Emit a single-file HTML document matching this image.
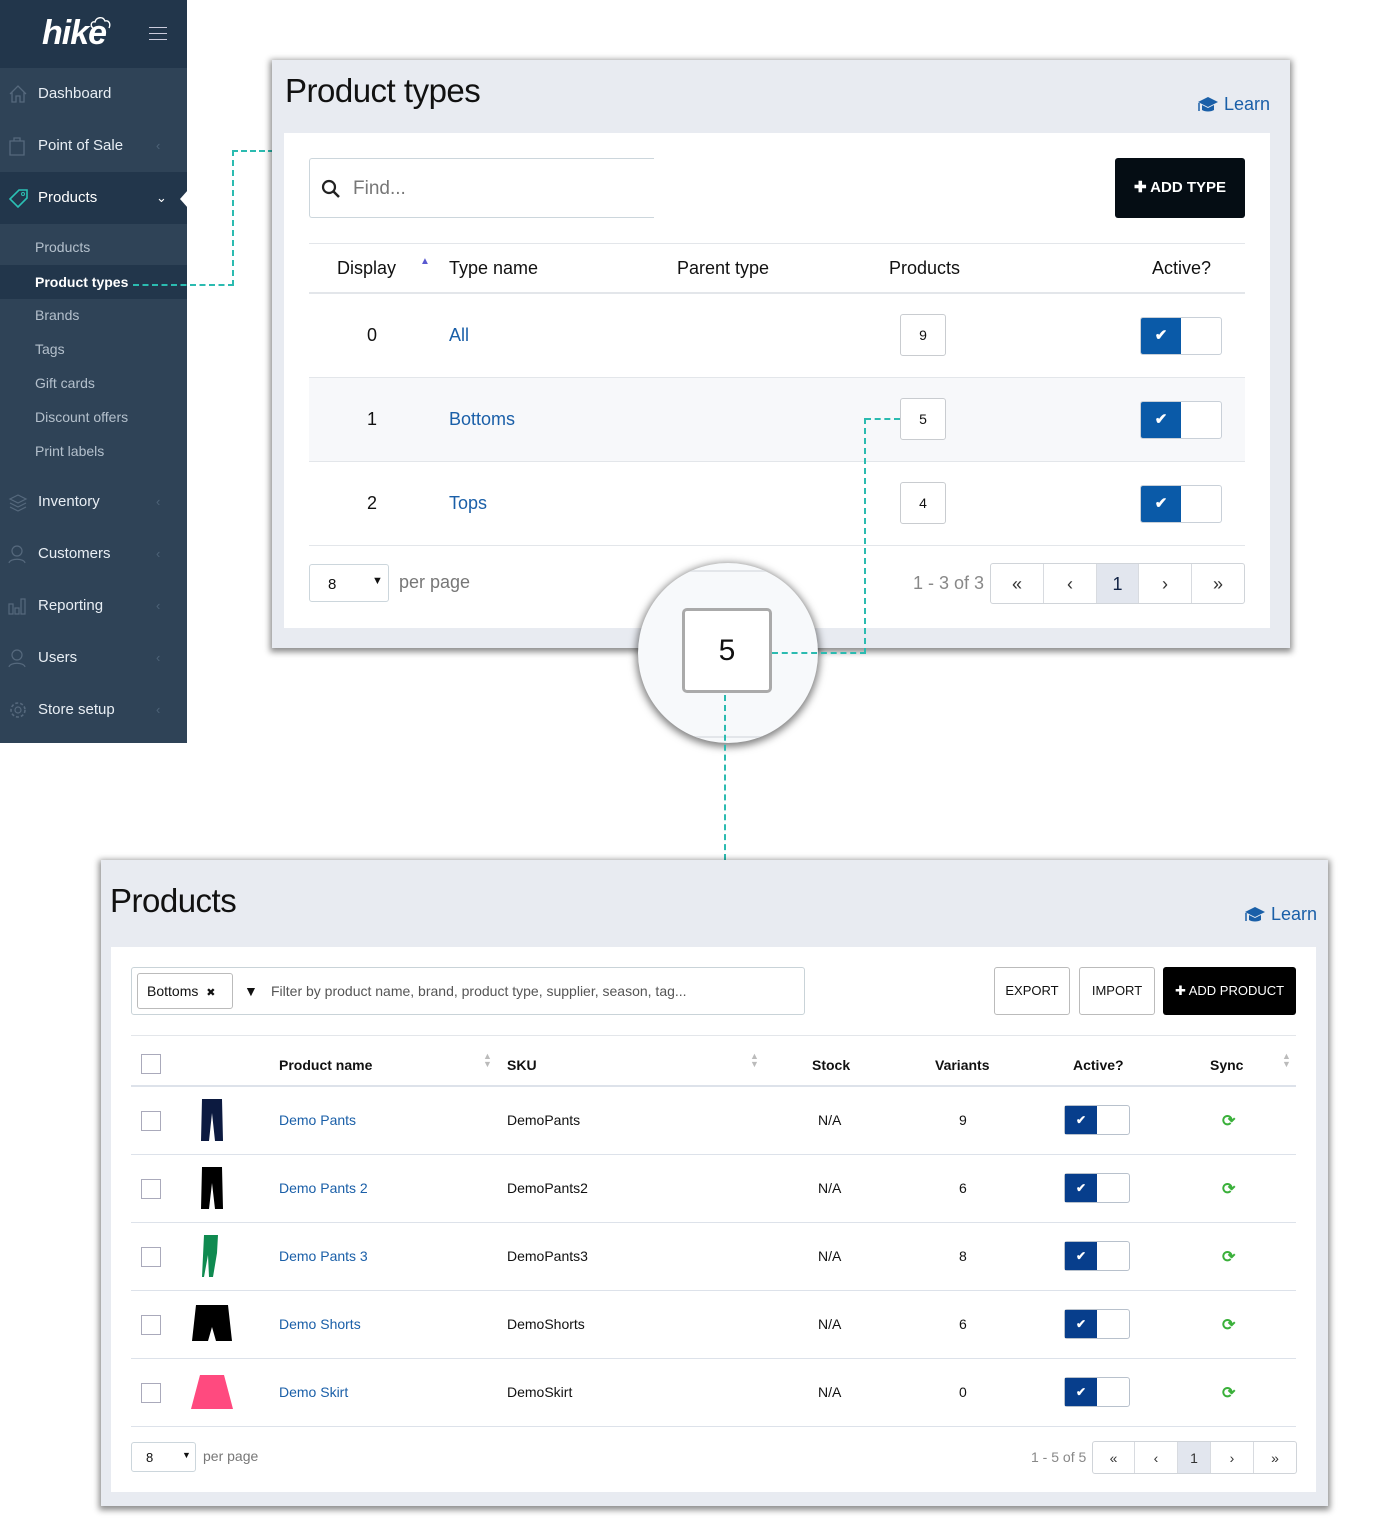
<!DOCTYPE html>
<html><head><meta charset="utf-8"><style>
*{box-sizing:border-box;margin:0;padding:0}
body{width:1392px;height:1533px;background:#fff;position:relative;font-family:"Liberation Sans",sans-serif;overflow:hidden;color:#111}
.a{position:absolute}
.side{left:0;top:0;width:187px;height:743px;background:#2f4357}
.mi{position:absolute;left:0;width:187px;height:52px;color:#e8eef4;font-size:15px;line-height:52px;padding-left:38px}
.mi .ch{position:absolute;left:156px;top:0;color:#4e6378;font-size:13px}
.mi svg{position:absolute;left:8px;top:16px}
.sub{position:absolute;left:0;width:187px;height:34px;line-height:34px;padding-left:35px;font-size:14px;color:#b4c0cc}
.panel{background:#e8ebf1;box-shadow:0 2px 6px 2px rgba(0,0,0,.45)}
.card{background:#fff}
.tg{position:absolute;width:82px;height:38px;border:1px solid #c9d0d8;border-radius:3px;background:#fff}
.tg i{position:absolute;left:0;top:0;width:40px;height:36px;background:#0a5aa8;border-radius:2px 0 0 2px;color:#fff;font-style:normal;text-align:center;line-height:36px;font-size:15px;font-weight:bold}
.nb{position:absolute;width:46px;height:42px;border:1px solid #c9ccd0;border-radius:3px;text-align:center;line-height:40px;font-size:14px;background:#fff}
.dash{position:absolute;border-color:#2bbbb0;border-style:dashed;border-width:0}
.lnk{color:#1a5fa8}
.tg2{position:absolute;width:66px;height:30px;border:1px solid #b8c1cc;border-radius:3px;background:#fff}
.tg2 i{position:absolute;left:0;top:0;width:32px;height:28px;background:#073e8c;color:#fff;font-style:normal;text-align:center;line-height:28px;font-size:12px;font-weight:bold}
.cb{position:absolute;left:141px;width:20px;height:20px;border:1px solid #aab;background:#fff}
.row{position:absolute;left:131px;width:1165px;height:68px;border-bottom:1px solid #dde2ea;font-size:14px}
.row span{position:absolute;top:25px}
.sync{position:absolute;left:1091px;top:24px;color:#3ab03a;font-size:16px;font-weight:bold}
.pg{position:absolute;display:flex;border:1px solid #d0d4d9;border-radius:3px;overflow:hidden;background:#fff}
.pg div{border-right:1px solid #d8dbe0;text-align:center;color:#333}
.pg div:last-child{border-right:0}
</style></head><body>

<div class="a side"></div>
<div class="a" style="left:0;top:0;width:187px;height:68px;background:#22364b"></div>
<div class="a" style="left:42px;top:14px;color:#fff;font-size:34px;font-weight:bold;font-style:italic;letter-spacing:-1px">hike</div>
<svg class="a" style="left:88px;top:14px" width="24" height="18"><path d="M5 14c-3-2-2-7 2-6 1-5 8-6 10-1 4-1 6 3 4 7" fill="none" stroke="#fff" stroke-width="1.4"/></svg>
<div class="a" style="left:149px;top:27px;width:18px;height:1px;background:#ccd;box-shadow:0 6px 0 #ccd,0 12px 0 #ccd"></div>
<div class="mi" style="top:68px"><svg width="20" height="20"><path d="M2 10L10 2l8 8M4 8v10h4v-6h4v6h4V8" fill="none" stroke="#56697d" stroke-width="1.3"/></svg>Dashboard</div>
<div class="mi" style="top:120px"><svg width="20" height="20"><path d="M2 5h14v14H2zM6 5V2h6v3" fill="none" stroke="#56697d" stroke-width="1.3"/></svg>Point of Sale<span class="ch">‹</span></div>
<div class="mi" style="top:172px;background:#22364b;color:#fff"><svg width="22" height="20"><path d="M2 11l9-9h8v8l-9 9z" fill="none" stroke="#2bc0b4" stroke-width="1.6"/><circle cx="15" cy="6" r="1.5" fill="none" stroke="#2bc0b4"/></svg>Products<span class="ch" style="color:#fff;left:156px">⌄</span></div>
<div class="a" style="left:180px;top:190px;width:0;height:0;border-top:9px solid transparent;border-bottom:9px solid transparent;border-right:8px solid #fff"></div>
<div class="sub" style="top:230px">Products</div>
<div class="sub" style="top:265px;background:#22364b;color:#fff;font-weight:bold">Product types</div>
<div class="sub" style="top:298px">Brands</div>
<div class="sub" style="top:332px">Tags</div>
<div class="sub" style="top:366px">Gift cards</div>
<div class="sub" style="top:400px">Discount offers</div>
<div class="sub" style="top:434px">Print labels</div>
<div class="mi" style="top:476px"><svg width="20" height="20"><path d="M2 7l8-4 8 4-8 4zM2 11l8 4 8-4M2 15l8 4 8-4" fill="none" stroke="#56697d" stroke-width="1.2"/></svg>Inventory<span class="ch">‹</span></div>
<div class="mi" style="top:528px"><svg width="20" height="20"><circle cx="9" cy="7" r="5" fill="none" stroke="#56697d" stroke-width="1.2"/><path d="M1 19c1-5 15-5 16 0" fill="none" stroke="#56697d" stroke-width="1.2"/></svg>Customers<span class="ch">‹</span></div>
<div class="mi" style="top:580px"><svg width="20" height="20"><path d="M1 8h4v10H1zM7 12h4v6H7zM13 3h4v15h-4z" fill="none" stroke="#56697d" stroke-width="1.2"/></svg>Reporting<span class="ch">‹</span></div>
<div class="mi" style="top:632px"><svg width="20" height="20"><circle cx="9" cy="7" r="5" fill="none" stroke="#56697d" stroke-width="1.2"/><path d="M1 19c1-5 15-5 16 0" fill="none" stroke="#56697d" stroke-width="1.2"/></svg>Users<span class="ch">‹</span></div>
<div class="mi" style="top:684px"><svg width="20" height="20"><circle cx="10" cy="10" r="3" fill="none" stroke="#56697d" stroke-width="1.2"/><circle cx="10" cy="10" r="7" fill="none" stroke="#56697d" stroke-width="1.6" stroke-dasharray="3 2"/></svg>Store setup<span class="ch">‹</span></div>

<div class="dash" style="left:133px;top:284px;width:101px;border-bottom-width:2px"></div>
<div class="dash" style="left:232px;top:150px;height:136px;border-left-width:2px"></div>
<div class="dash" style="left:232px;top:150px;width:42px;border-top-width:2px"></div>

<div class="a panel" style="left:272px;top:60px;width:1018px;height:588px"></div>
<div class="a" style="left:285px;top:72px;font-size:33px;letter-spacing:-0.5px">Product types</div>
<svg class="a" style="left:1197px;top:96px" width="22" height="18"><path d="M1 6l10-5 10 5-10 5z" fill="#1a5fa8"/><path d="M5 9v5c3 2 9 2 12 0V9l-6 3z" fill="#1a5fa8"/><path d="M2 7v8" stroke="#1a5fa8" stroke-width="1.5"/></svg>
<div class="a lnk" style="left:1224px;top:94px;font-size:18px">Learn</div>
<div class="a card" style="left:284px;top:133px;width:986px;height:495px"></div>
<div class="a" style="left:309px;top:158px;width:345px;height:60px;border:1px solid #ccd6dc;border-right:0;border-radius:3px 0 0 3px"></div>
<svg class="a" style="left:321px;top:179px" width="20" height="20"><circle cx="8" cy="8" r="6" fill="none" stroke="#222" stroke-width="2.2"/><path d="M12 12l6 6" stroke="#222" stroke-width="2.5"/></svg>
<div class="a" style="left:353px;top:178px;font-size:19px;color:#777">Find...</div>
<div class="a" style="left:1115px;top:158px;width:130px;height:60px;background:#050d14;border-radius:3px;color:#fff;font-size:15px;font-weight:bold;line-height:60px;text-align:center">✚ ADD TYPE</div>
<div class="a" style="left:309px;top:243px;width:936px;height:1px;background:#e3e6ea"></div>
<div class="a" style="left:309px;top:292px;width:936px;height:2px;background:#e3e6ea"></div>
<div class="a" style="top:258px;left:337px;font-size:18px">Display</div>
<div class="a" style="top:256px;left:420px;font-size:10px;color:#5a5ad0">▲</div>
<div class="a" style="top:258px;left:449px;font-size:18px">Type name</div>
<div class="a" style="top:258px;left:677px;font-size:18px">Parent type</div>
<div class="a" style="top:258px;left:889px;font-size:18px">Products</div>
<div class="a" style="top:258px;left:1152px;font-size:18px">Active?</div>

<div class="a" style="left:309px;top:294px;width:936px;height:84px;border-bottom:1px solid #e3e6ea"></div>
<div class="a" style="left:309px;top:378px;width:936px;height:84px;background:#f7f8fa;border-bottom:1px solid #e3e6ea"></div>
<div class="a" style="left:309px;top:462px;width:936px;height:84px;border-bottom:1px solid #e3e6ea"></div>
<div class="a" style="left:367px;top:325px;font-size:18px">0</div>
<div class="a lnk" style="left:449px;top:325px;font-size:18px">All</div>
<div class="nb" style="left:900px;top:314px">9</div>
<div class="tg" style="left:1140px;top:317px"><i>✔</i></div>
<div class="a" style="left:367px;top:409px;font-size:18px">1</div>
<div class="a lnk" style="left:449px;top:409px;font-size:18px">Bottoms</div>
<div class="nb" style="left:900px;top:398px">5</div>
<div class="tg" style="left:1140px;top:401px"><i>✔</i></div>
<div class="a" style="left:367px;top:493px;font-size:18px">2</div>
<div class="a lnk" style="left:449px;top:493px;font-size:18px">Tops</div>
<div class="nb" style="left:900px;top:482px">4</div>
<div class="tg" style="left:1140px;top:485px"><i>✔</i></div>

<div class="a" style="left:309px;top:564px;width:80px;height:38px;border:1px solid #ccd6dc;border-radius:3px;font-size:15px;padding:11px 0 0 18px">8<span style="position:absolute;left:62px;top:10px;font-size:11px">▼</span></div>
<div class="a" style="left:399px;top:572px;font-size:18px;color:#777">per page</div>
<div class="a" style="left:913px;top:573px;font-size:18px;color:#888">1 - 3 of 3</div>
<div class="pg" style="left:990px;top:563px;height:41px;font-size:18px;line-height:40px">
<div style="width:53px">«</div><div style="width:53px">‹</div><div style="width:42px;background:#e2e6ee;color:#124">1</div><div style="width:53px">›</div><div style="width:52px">»</div></div>

<div class="dash" style="left:865px;top:418px;width:35px;border-top-width:2px"></div>
<div class="dash" style="left:864px;top:418px;height:236px;border-left-width:2px"></div>

<div class="a" style="left:638px;top:563px;width:180px;height:180px;border-radius:50%;background:#f7f9fb;box-shadow:0 2px 8px 2px rgba(0,0,0,.5);overflow:hidden">
<div style="position:absolute;left:0;top:7px;width:180px;height:2px;background:#e3e6ea"></div>
<div style="position:absolute;left:0;top:173px;width:180px;height:2px;background:#e3e6ea"></div></div>
<div class="a" style="left:682px;top:608px;width:90px;height:85px;border:3px solid #aaa;border-radius:5px;background:#fff;text-align:center;line-height:80px;font-size:30px">5</div>
<div class="dash" style="left:772px;top:652px;width:94px;border-top-width:2px"></div>
<div class="dash" style="left:724px;top:695px;height:165px;border-left-width:2px"></div>

<div class="a panel" style="left:101px;top:860px;width:1227px;height:646px"></div>
<div class="a" style="left:110px;top:882px;font-size:33px;letter-spacing:-0.5px">Products</div>
<svg class="a" style="left:1244px;top:906px" width="22" height="18"><path d="M1 6l10-5 10 5-10 5z" fill="#1a5fa8"/><path d="M5 9v5c3 2 9 2 12 0V9l-6 3z" fill="#1a5fa8"/><path d="M2 7v8" stroke="#1a5fa8" stroke-width="1.5"/></svg>
<div class="a lnk" style="left:1271px;top:904px;font-size:18px">Learn</div>
<div class="a card" style="left:111px;top:947px;width:1205px;height:545px"></div>
<div class="a" style="left:131px;top:967px;width:674px;height:48px;border:1px solid #c9d3d8;border-radius:3px"></div>
<div class="a" style="left:137px;top:973px;width:96px;height:36px;border:1px solid #bbb;border-radius:3px;font-size:14px;line-height:34px;padding-left:9px">Bottoms <span style="font-size:11px;margin-left:4px">✖</span></div>
<div class="a" style="left:244px;top:983px;font-size:14px">▼</div>
<div class="a" style="left:271px;top:983px;font-size:14px;color:#555">Filter by product name, brand, product type, supplier, season, tag...</div>
<div class="a" style="left:994px;top:967px;width:76px;height:48px;border:1px solid #bbb;border-radius:3px;font-size:13px;line-height:46px;text-align:center">EXPORT</div>
<div class="a" style="left:1079px;top:967px;width:76px;height:48px;border:1px solid #bbb;border-radius:3px;font-size:13px;line-height:46px;text-align:center">IMPORT</div>
<div class="a" style="left:1163px;top:967px;width:133px;height:48px;background:#000;border-radius:3px;color:#fff;font-size:13px;line-height:48px;text-align:center">✚ ADD PRODUCT</div>
<div class="a" style="left:131px;top:1035px;width:1165px;height:1px;background:#e3e6ea"></div>
<div class="a" style="left:131px;top:1085px;width:1165px;height:2px;background:#dde2ea"></div>
<div class="cb" style="top:1054px"></div>
<div class="a" style="left:279px;top:1057px;font-size:14px;font-weight:bold">Product name</div>
<div class="a" style="left:483px;top:1052px;font-size:9px;color:#bbb;line-height:8px">▲<br>▼</div>
<div class="a" style="left:507px;top:1057px;font-size:14px;font-weight:bold">SKU</div>
<div class="a" style="left:750px;top:1052px;font-size:9px;color:#bbb;line-height:8px">▲<br>▼</div>
<div class="a" style="left:812px;top:1057px;font-size:14px;font-weight:bold">Stock</div>
<div class="a" style="left:935px;top:1057px;font-size:14px;font-weight:bold">Variants</div>
<div class="a" style="left:1073px;top:1057px;font-size:14px;font-weight:bold">Active?</div>
<div class="a" style="left:1210px;top:1057px;font-size:14px;font-weight:bold">Sync</div>
<div class="a" style="left:1282px;top:1052px;font-size:9px;color:#bbb;line-height:8px">▲<br>▼</div>

<div class="row" style="top:1087px"><div class="cb" style="left:10px;top:24px"></div>
<svg style="position:absolute;left:68px;top:12px" width="26" height="42"><path d="M3 0h20l1 42h-8l-3-28-3 28H2z" fill="#0c1a40"/></svg>
<span class="lnk" style="left:148px">Demo Pants</span><span style="left:376px">DemoPants</span><span style="left:687px">N/A</span><span style="left:828px">9</span>
<div class="tg2" style="left:933px;top:18px"><i>✔</i></div><div class="sync">⟳</div></div>
<div class="row" style="top:1155px"><div class="cb" style="left:10px;top:24px"></div>
<svg style="position:absolute;left:68px;top:12px" width="26" height="42"><path d="M3 0h20l1 42h-8l-3-26-3 26H2z" fill="#000"/></svg>
<span class="lnk" style="left:148px">Demo Pants 2</span><span style="left:376px">DemoPants2</span><span style="left:687px">N/A</span><span style="left:828px">6</span>
<div class="tg2" style="left:933px;top:18px"><i>✔</i></div><div class="sync">⟳</div></div>
<div class="row" style="top:1223px"><div class="cb" style="left:10px;top:24px"></div>
<svg style="position:absolute;left:70px;top:12px" width="20" height="42"><path d="M3 0h14l-1 18-4 24H8l-1-22-4 22H1z" fill="#0f8a50"/></svg>
<span class="lnk" style="left:148px">Demo Pants 3</span><span style="left:376px">DemoPants3</span><span style="left:687px">N/A</span><span style="left:828px">8</span>
<div class="tg2" style="left:933px;top:18px"><i>✔</i></div><div class="sync">⟳</div></div>
<div class="row" style="top:1291px"><div class="cb" style="left:10px;top:24px"></div>
<svg style="position:absolute;left:60px;top:14px" width="42" height="38"><path d="M5 0h32l4 36H25l-4-14-4 14H1z" fill="#000"/></svg>
<span class="lnk" style="left:148px">Demo Shorts</span><span style="left:376px">DemoShorts</span><span style="left:687px">N/A</span><span style="left:828px">6</span>
<div class="tg2" style="left:933px;top:18px"><i>✔</i></div><div class="sync">⟳</div></div>
<div class="row" style="top:1359px"><div class="cb" style="left:10px;top:24px"></div>
<svg style="position:absolute;left:60px;top:16px" width="42" height="36"><path d="M9 0h24l9 34H0z" fill="#ff4a7f"/></svg>
<span class="lnk" style="left:148px">Demo Skirt</span><span style="left:376px">DemoSkirt</span><span style="left:687px">N/A</span><span style="left:828px">0</span>
<div class="tg2" style="left:933px;top:18px"><i>✔</i></div><div class="sync">⟳</div></div>

<div class="a" style="left:131px;top:1442px;width:65px;height:30px;border:1px solid #ccd6dc;border-radius:3px;font-size:13px;padding:7px 0 0 14px">8<span style="position:absolute;left:50px;top:7px;font-size:9px">▼</span></div>
<div class="a" style="left:203px;top:1448px;font-size:14px;color:#777">per page</div>
<div class="a" style="left:1031px;top:1449px;font-size:14px;color:#888">1 - 5 of 5</div>
<div class="pg" style="left:1092px;top:1441px;height:33px;font-size:14px;line-height:32px">
<div style="width:42px">«</div><div style="width:43px">‹</div><div style="width:33px;background:#e2e6ee">1</div><div style="width:43px">›</div><div style="width:42px">»</div></div>
</body></html>
